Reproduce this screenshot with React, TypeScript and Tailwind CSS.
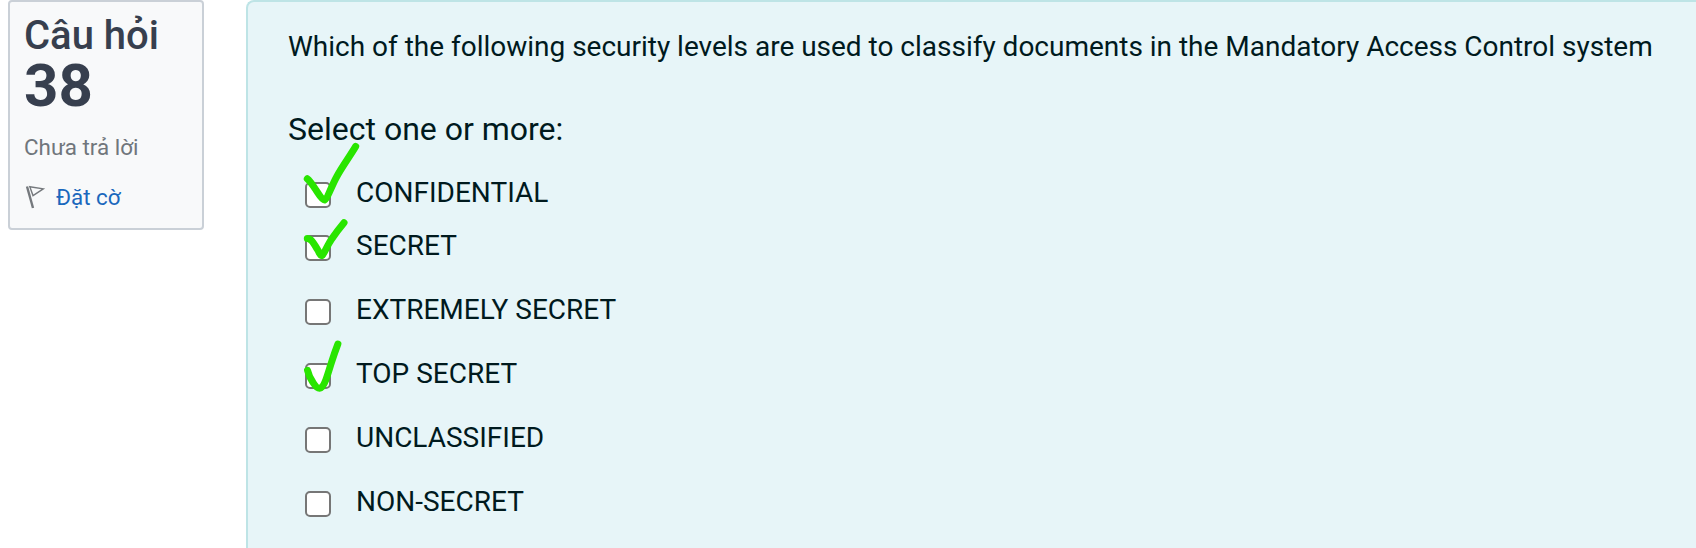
import React from "react";

type Option = { label: string; mark?: string; row: string };

const OPTIONS: Option[] = [
  { label: "CONFIDENTIAL", row: "h-[53px]", mark: "M2.3 -3.2 C6 -0.5 8 4 11 8 C14 12.5 16.5 17.7 19.8 18 C22.5 17 25.5 6 31.7 -5.3 C37 -15 45 -26 50.7 -35.6" },
  { label: "SECRET", row: "h-16", mark: "M2.3 3.5 C7 3.5 9.5 10 12.5 14.5 C14.5 18 15 20.7 17 20.7 C19.5 18 22.5 10 26.7 4 C31 -2.5 35 -7.5 39 -12.3" },
  { label: "EXTREMELY SECRET", row: "h-16" },
  { label: "TOP SECRET", row: "h-16", mark: "M2.5 7.3 C3.5 12 6 16.5 8 19.5 C10.5 23.5 12 25.3 14.5 25.3 C17.5 25 19.5 20.5 21 16.5 C23 11 25 4 26.7 -1.3 C29 -8.5 31 -14 32.9 -19" },
  { label: "UNCLASSIFIED", row: "h-16" },
  { label: "NON-SECRET", row: "h-16" },
];

function FlagIcon() {
  return (
    <svg width="20" height="24" viewBox="0 0 20 24" className="overflow-visible" fill="none" stroke="#75797d">
      <path d="M3 1.5 L9 23" strokeWidth="2.4" />
      <path d="M5.8 1.7 L19.3 3.8 L9 10.6 Z" strokeWidth="1.4" />
    </svg>
  );
}

function QuestionInfo() {
  return (
    <aside className="ml-2 h-[230px] w-[196px] shrink-0 rounded-[4px] border-2 border-[#cad0d7] bg-[#f8f9fa] pl-[14px]">
      <h3 className="pt-[10px] text-[40px] font-medium leading-[48px] whitespace-nowrap text-[#373f4e]">
        Câu hỏi
      </h3>
      <div className="text-[60px] font-bold leading-[52px] text-[#373f4e]">38</div>
      <div className="mt-[18px] text-[22.4px] leading-[34px] text-[#70767c]">Chưa trả lời</div>
      <div className="mt-4 flex items-center text-[22.4px] leading-[34px] text-[#1b68bd]">
        <FlagIcon />
        <span className="ml-3">Đặt cờ</span>
      </div>
    </aside>
  );
}

function OptionRow({ label, mark, row }: Option) {
  return (
    <label className={`flex items-start ${row}`}>
      <span className="relative mt-[11px] size-[26px] shrink-0 rounded-[5px] border-2 border-[#767676] bg-white">
        {mark && (
          <svg
            className="absolute -top-[2px] -left-[2px] overflow-visible"
            width="26"
            height="26"
            viewBox="0 0 26 26"
            fill="none"
            stroke="#29e500"
            strokeWidth="7"
            strokeLinecap="round"
            strokeLinejoin="round"
          >
            <path d={mark} />
          </svg>
        )}
      </span>
      <span className="ml-[25px] pt-px leading-[42px]">{label}</span>
    </label>
  );
}

export default function App() {
  return (
    <div className="flex h-[548px] overflow-hidden bg-white font-['Roboto',sans-serif]">
      <QuestionInfo />
      <main className="ml-[42px] flex-1 rounded-tl-[8px] border-t-2 border-l-2 border-[#bee4e6] bg-[#e7f5f8] pt-6 pl-10 text-[28px] whitespace-nowrap text-[#001a1e]">
        <p className="leading-[42px] tracking-[-0.01px]">
          Which of the following security levels are used to classify documents in the Mandatory Access Control system
        </p>
        <h4 className="mt-[37px] text-[32px] leading-[48px]">Select one or more:</h4>
        <div className="mt-[18px] pl-[17px]">
          {OPTIONS.map((o) => (
            <OptionRow key={o.label} {...o} />
          ))}
        </div>
      </main>
    </div>
  );
}
